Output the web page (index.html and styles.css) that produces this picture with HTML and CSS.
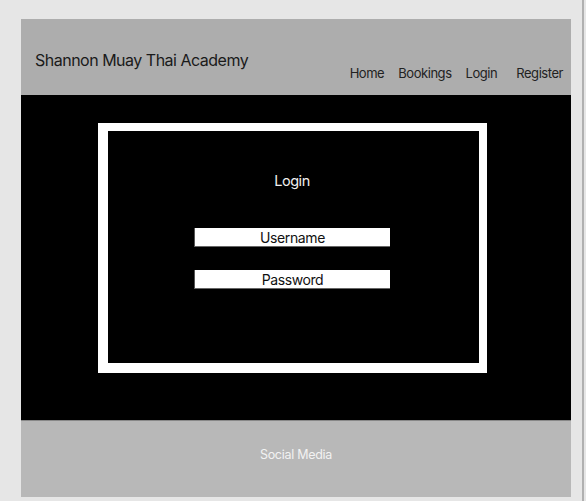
FILE: index.html
```html
<!DOCTYPE html>
<html lang="en">
<head>
<meta charset="utf-8">
<title>Shannon Muay Thai Academy</title>
<link rel="stylesheet" href="styles.css">
</head>
<body>
<div class="page">
  <div class="frame">
    <header class="header">
      <div class="title">Shannon Muay Thai Academy</div>
      <nav class="nav">
        <span class="nav-home">Home</span>
        <span class="nav-bookings">Bookings</span>
        <span class="nav-login">Login</span>
        <span class="nav-register">Register</span>
      </nav>
    </header>
    <main class="main">
      <div class="login-box">
        <div class="login-title">Login</div>
        <div class="field field-user">Username</div>
        <div class="field field-pass">Password</div>
      </div>
    </main>
    <footer class="footer">Social Media</footer>
  </div>
  <div class="rule"></div>
</div>
</body>
</html>
```

FILE: styles.css
```css
html, body {
  margin: 0;
  padding: 0;
}
body {
  background: #e6e6e6;
  font-family: Inter, "Noto Sans", sans-serif;
}
.page {
  display: flex;
  height: 501px;
}
.frame {
  width: 550px;
  margin: 19px 0 0 21px;
  display: flex;
  flex-direction: column;
  align-self: flex-start;
}
.rule {
  width: 2px;
  margin-left: 11px;
  background: #b0b0b0;
  align-self: stretch;
}
.header {
  height: 76px;
  background: #adadad;
  display: flex;
  justify-content: space-between;
  align-items: flex-start;
  box-sizing: border-box;
  padding: 0 8px 0 14px;
}
.title {
  font-size: 16px;
  letter-spacing: -0.5px;
  line-height: 20px;
  color: #1a1a1a;
  padding-top: 31px;
}
.nav {
  display: flex;
  font-size: 13px;
  letter-spacing: -0.45px;
  line-height: 16px;
  color: #222;
  padding-top: 46px;
}
.nav-bookings { margin-left: 14px; }
.nav-login { margin-left: 14px; }
.nav-register { margin-left: 19px; }
.main {
  height: 325px;
  background: #000;
  box-sizing: border-box;
  padding-top: 28px;
  padding-left: 77px;
}
.login-box {
  width: 389px;
  height: 250px;
  box-sizing: border-box;
  border: 9px solid #fff;
  border-top-width: 8px;
  border-left-width: 10px;
  border-right-width: 8px;
  border-bottom-width: 10px;
  display: flex;
  flex-direction: column;
  align-items: center;
  padding-top: 41px;
  padding-right: 3px;
}
.login-title {
  font-size: 14.5px;
  letter-spacing: -0.45px;
  line-height: 18px;
  color: #eeeeee;
}
.field {
  width: 196px;
  height: 19px;
  box-sizing: border-box;
  background: #fff;
  border-bottom: 1px solid #666;
  border-left: 1px solid #555;
  color: #111;
  font-size: 14px;
  letter-spacing: -0.4px;
  line-height: 19px;
  text-align: center;
}
.field-user { margin-top: 38px; }
.field-pass { margin-top: 23px; }
.footer {
  height: 77px;
  background: #b8b8b8;
  border-top: 1px solid #888;
  box-sizing: border-box;
  color: #f2f2f2;
  font-size: 12.5px;
  letter-spacing: -0.28px;
  line-height: 16px;
  text-align: center;
  padding-top: 26px;
}
```
